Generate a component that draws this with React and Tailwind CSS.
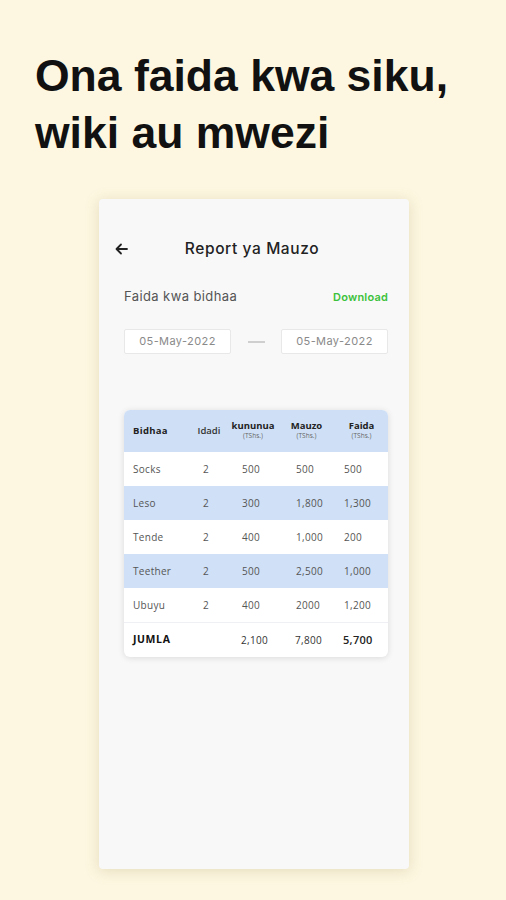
import React from "react";

const rows = [
  { name: "Socks", q: "2", k: "500", m: "500", f: "500", blue: false },
  { name: "Leso", q: "2", k: "300", m: "1,800", f: "1,300", blue: true },
  { name: "Tende", q: "2", k: "400", m: "1,000", f: "200", blue: false },
  { name: "Teether", q: "2", k: "500", m: "2,500", f: "1,000", blue: true },
  { name: "Ubuyu", q: "2", k: "400", m: "2000", f: "1,200", blue: false },
];

const cols = "grid grid-cols-[57px_38px_50px_57px_53px]";

export default function App() {
  return (
    <div className="w-[506px] h-[900px] overflow-hidden bg-[#fdf7e1] flex flex-col">
      <h1
        className="pl-[35px] pt-[47px] text-[44.5px] leading-[57px] font-bold text-[#111]"
        style={{ fontFamily: '"Liberation Sans", Arial, sans-serif' }}
      >
        Ona faida kwa siku,
        <br />
        wiki au mwezi
      </h1>
      <div
        className="ml-[99px] mt-[38px] w-[310px] h-[670px] bg-[#f8f8f9] rounded-[4px] shadow-[0_2px_14px_rgba(160,140,80,0.25)] flex flex-col pl-[25px] pr-[21px]"
        style={{ fontFamily: 'Inter, "Open Sans", sans-serif' }}
      >
        <div className="relative mt-[38px] h-[24px] flex items-center justify-center pr-[8px]">
          <svg
            className="absolute left-[-9px] top-[6px]"
            width="13"
            height="12"
            viewBox="0 0 13 12"
            fill="none"
            stroke="#222"
            strokeWidth="1.8"
            strokeLinecap="round"
            strokeLinejoin="round"
          >
            <path d="M12 6H2M6 1.5L1.5 6L6 10.5" />
          </svg>
          <span className="text-[15.5px] font-medium text-[#222] tracking-[0.6px]">Report ya Mauzo</span>
        </div>
        <div className="mt-[26px] flex items-center justify-between h-[20px]">
          <span className="text-[13px] text-[#555] tracking-[0.4px]">Faida kwa bidhaa</span>
          <span className="text-[11px] font-semibold text-[#3dc23c] tracking-[0.2px]">Download</span>
        </div>
        <div className="mt-[22px] flex items-center justify-between">
          <div className="w-[107px] h-[25px] bg-white border border-[#e8e8e8] rounded-[2px] flex items-center justify-center text-[11px] text-[#8a8a8a] tracking-[0.4px]">
            05-May-2022
          </div>
          <div className="w-[17px] h-[2px] bg-[#cfcfcf]" />
          <div className="w-[107px] h-[25px] bg-white border border-[#e8e8e8] rounded-[2px] flex items-center justify-center text-[11px] text-[#8a8a8a] tracking-[0.4px]">
            05-May-2022
          </div>
        </div>
        <div
          className="mt-[56px] w-[264px] rounded-[6px] overflow-hidden bg-white shadow-[0_1px_6px_rgba(0,0,0,0.12)] flex flex-col"
          style={{ fontFamily: '"Open Sans", Lato, sans-serif' }}
        >
          <div className={`h-[42px] bg-[#cfe0f6] ${cols} items-center pl-[9px] text-[#222]`}>
            <span className="text-[9.5px] font-bold tracking-[0.3px]">Bidhaa</span>
            <span className="text-[9.5px] font-semibold text-[#333] text-center">Idadi</span>
            <div className="flex flex-col items-center leading-[10px]">
              <span className="text-[9.5px] font-bold">kununua</span>
              <span className="text-[6.5px] text-[#666]">(TShs.)</span>
            </div>
            <div className="flex flex-col items-center leading-[10px]">
              <span className="text-[9.5px] font-bold">Mauzo</span>
              <span className="text-[6.5px] text-[#666]">(TShs.)</span>
            </div>
            <div className="flex flex-col items-center leading-[10px]">
              <span className="text-[9.5px] font-bold">Faida</span>
              <span className="text-[6.5px] text-[#666]">(TShs.)</span>
            </div>
          </div>
          {rows.map((r) => (
            <div
              key={r.name}
              className={`h-[34px] ${cols} items-center pl-[9px] text-[10px] text-[#555] tracking-[0.3px] ${
                r.blue ? "bg-[#cfe0f7]" : "bg-white"
              }`}
            >
              <span>{r.name}</span>
              <span className="pl-[13px]">{r.q}</span>
              <span className="pl-[14px]">{r.k}</span>
              <span className="pl-[18px]">{r.m}</span>
              <span className="pl-[9px]">{r.f}</span>
            </div>
          ))}
          <div className={`h-[35px] border-t border-[#eef0f3] ${cols} items-center pl-[9px] text-[10px] text-[#333] tracking-[0.3px]`}>
            <span className="font-bold text-[10.5px] text-[#111] tracking-[0.6px]">JUMLA</span>
            <span />
            <span className="pl-[13px]">2,100</span>
            <span className="pl-[17px]">7,800</span>
            <span className="pl-[8px] font-semibold text-[11px] text-[#222]">5,700</span>
          </div>
        </div>
      </div>
    </div>
  );
}
